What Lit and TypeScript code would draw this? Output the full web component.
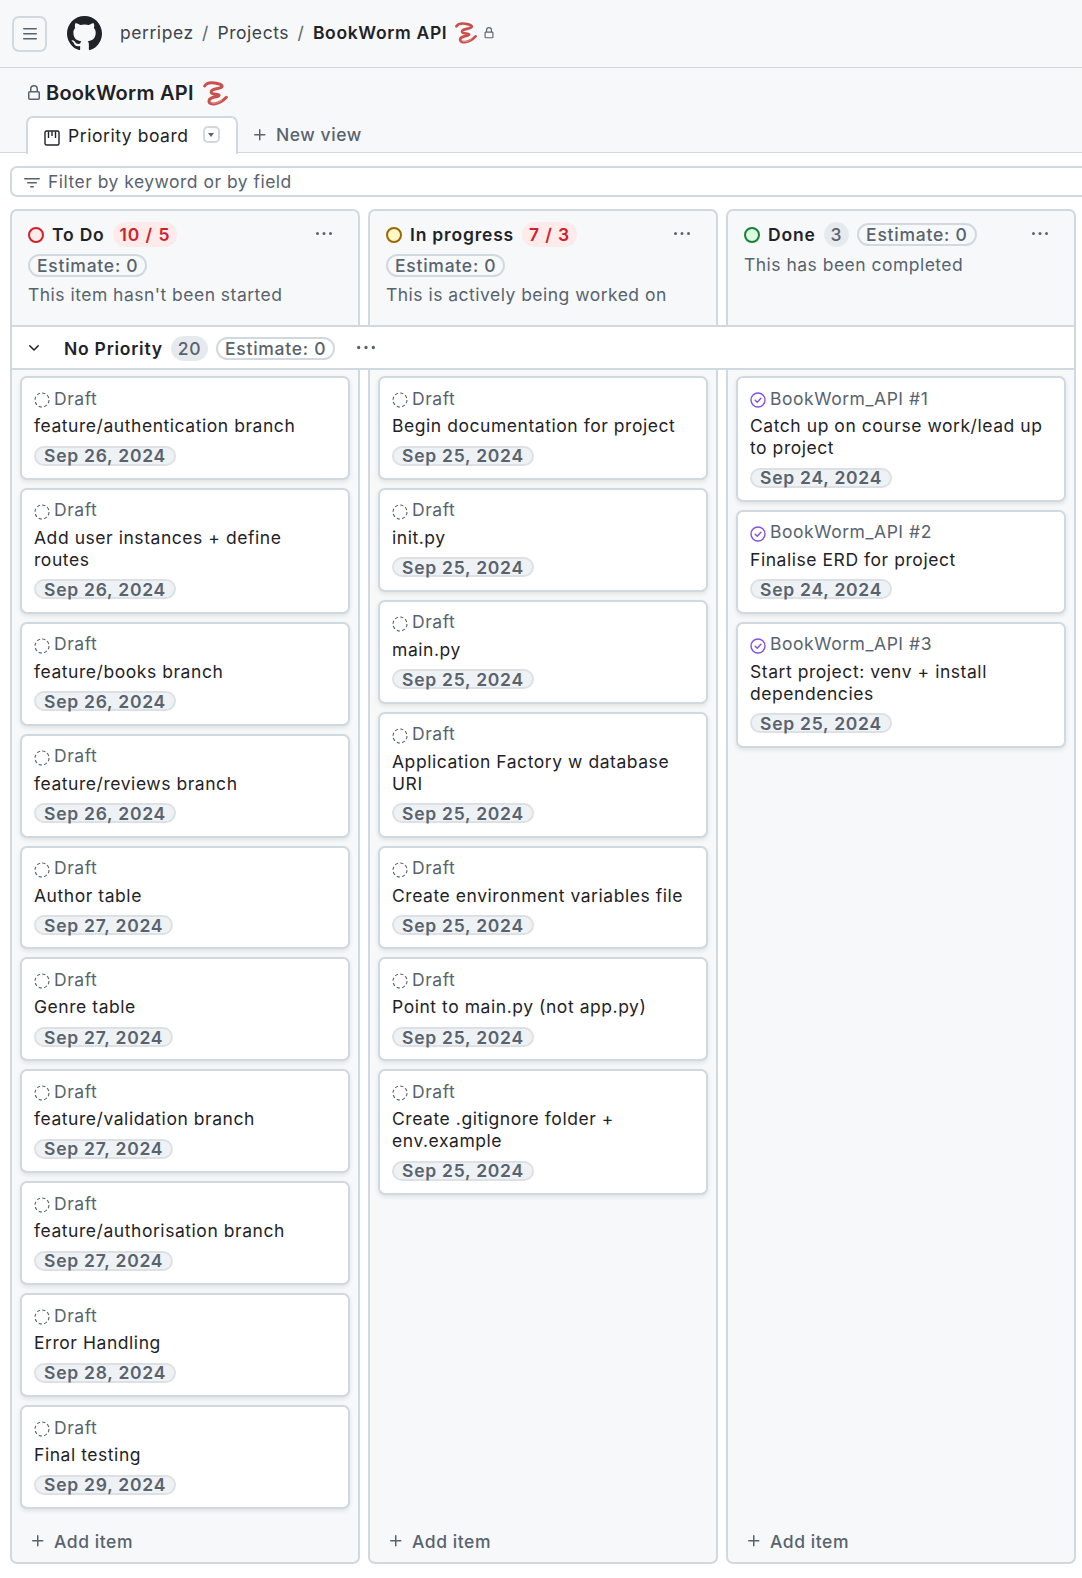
import { LitElement, html, css, svg } from 'lit';
import { customElement } from 'lit/decorators.js';

interface Card {
  meta: string;
  title: string;
  date: string;
}

interface Column {
  name: string;
  status: string;
  count: string;
  over: boolean;
  note: string;
  cards: Card[];
}

const draft = (title: string, date: string): Card => ({ meta: 'Draft', title, date });

const COLUMNS: Column[] = [
  {
    name: 'To Do',
    status: 'todo',
    count: '10 / 5',
    over: true,
    note: "This item hasn't been started",
    cards: [
      draft('feature/authentication branch', 'Sep 26, 2024'),
      draft('Add user instances + define routes', 'Sep 26, 2024'),
      draft('feature/books branch', 'Sep 26, 2024'),
      draft('feature/reviews branch', 'Sep 26, 2024'),
      draft('Author table', 'Sep 27, 2024'),
      draft('Genre table', 'Sep 27, 2024'),
      draft('feature/validation branch', 'Sep 27, 2024'),
      draft('feature/authorisation branch', 'Sep 27, 2024'),
      draft('Error Handling', 'Sep 28, 2024'),
      draft('Final testing', 'Sep 29, 2024'),
    ],
  },
  {
    name: 'In progress',
    status: 'progress',
    count: '7 / 3',
    over: true,
    note: 'This is actively being worked on',
    cards: [
      draft('Begin documentation for project', 'Sep 25, 2024'),
      draft('init.py', 'Sep 25, 2024'),
      draft('main.py', 'Sep 25, 2024'),
      draft('Application Factory w database URI', 'Sep 25, 2024'),
      draft('Create environment variables file', 'Sep 25, 2024'),
      draft('Point to main.py (not app.py)', 'Sep 25, 2024'),
      draft('Create .gitignore folder + env.example', 'Sep 25, 2024'),
    ],
  },
  {
    name: 'Done',
    status: 'done',
    count: '3',
    over: false,
    note: 'This has been completed',
    cards: [
      { meta: 'BookWorm_API #1', title: 'Catch up on course work/lead up to project', date: 'Sep 24, 2024' },
      { meta: 'BookWorm_API #2', title: 'Finalise ERD for project', date: 'Sep 24, 2024' },
      { meta: 'BookWorm_API #3', title: 'Start project: venv + install dependencies', date: 'Sep 25, 2024' },
    ],
  },
];

const PATHS = {
  bars: 'M1 2.75A.75.75 0 0 1 1.75 2h12.5a.75.75 0 0 1 0 1.5H1.75A.75.75 0 0 1 1 2.75Zm0 5A.75.75 0 0 1 1.75 7h12.5a.75.75 0 0 1 0 1.5H1.75A.75.75 0 0 1 1 7.75ZM1.75 12h12.5a.75.75 0 0 1 0 1.5H1.75a.75.75 0 0 1 0-1.5Z',
  github: 'M8 0c4.42 0 8 3.58 8 8a8.013 8.013 0 0 1-5.45 7.59c-.4.08-.55-.17-.55-.38 0-.27.01-1.13.01-2.2 0-.75-.25-1.23-.54-1.48 1.78-.2 3.65-.88 3.65-3.95 0-.88-.31-1.59-.82-2.15.08-.2.36-1.02-.08-2.12 0 0-.67-.22-2.2.82-.64-.18-1.32-.27-2-.27-.68 0-1.36.09-2 .27-1.53-1.03-2.2-.82-2.2-.82-.44 1.1-.16 1.92-.08 2.12-.51.56-.82 1.28-.82 2.15 0 3.06 1.86 3.75 3.64 3.95-.23.2-.44.55-.51 1.07-.46.21-1.61.55-2.33-.66-.15-.24-.6-.83-1.23-.82-.67.01-.27.38.01.53.34.19.73.9.82 1.13.16.45.68 1.31 2.69.94 0 .67.01 1.3.01 1.49 0 .21-.15.45-.55.38A7.995 7.995 0 0 1 0 8c0-4.42 3.58-8 8-8Z',
  lock: 'M4 4a4 4 0 0 1 8 0v2h.25c.966 0 1.75.784 1.75 1.75v5.5A1.75 1.75 0 0 1 12.25 15h-8.5A1.75 1.75 0 0 1 2 13.25v-5.5C2 6.784 2.784 6 3.75 6H4Zm8.25 3.5h-8.5a.25.25 0 0 0-.25.25v5.5c0 .138.112.25.25.25h8.5a.25.25 0 0 0 .25-.25v-5.5a.25.25 0 0 0-.25-.25ZM10.5 6V4a2.5 2.5 0 1 0-5 0v2Z',
  plus: 'M7.75 2a.75.75 0 0 1 .75.75V7h4.25a.75.75 0 0 1 0 1.5H8.5v4.25a.75.75 0 0 1-1.5 0V8.5H2.75a.75.75 0 0 1 0-1.5H7V2.75A.75.75 0 0 1 7.75 2Z',
  kebab: 'M8 9a1.5 1.5 0 1 0 0-3 1.5 1.5 0 0 0 0 3ZM1.5 9a1.5 1.5 0 1 0 0-3 1.5 1.5 0 0 0 0 3Zm13 0a1.5 1.5 0 1 0 0-3 1.5 1.5 0 0 0 0 3Z',
  chevron: 'M12.78 5.22a.749.749 0 0 1 0 1.06l-4.25 4.25a.749.749 0 0 1-1.06 0L3.22 6.28a.749.749 0 1 1 1.06-1.06L8 8.939l3.72-3.719a.749.749 0 0 1 1.06 0Z',
  filter: 'M.75 3h14.5a.75.75 0 0 1 0 1.5H.75a.75.75 0 0 1 0-1.5ZM3 7.75A.75.75 0 0 1 3.75 7h8.5a.75.75 0 0 1 0 1.5h-8.5A.75.75 0 0 1 3 7.75Zm3 4a.75.75 0 0 1 .75-.75h2.5a.75.75 0 0 1 0 1.5h-2.5a.75.75 0 0 1-.75-.75Z',
};

const icon = (d: string, size: number, cls = '') => html`
  <svg class=${cls} width=${size} height=${size} viewBox="0 0 16 16" fill="currentColor"><path d=${d}></path></svg>
`;

// the worm emoji, no colour emoji font in the sandbox
const worm = (size: number) => html`
  <svg class="worm" width=${size} height=${size} viewBox="0 0 24 24" fill="none" stroke-linecap="round" stroke-linejoin="round">
    ${svg`<path d="M2.500 5.500C5 1.500 11 2.500 15 3.500 19 4.500 20 6.500 16 7.500 12 8.500 8 9 8.500 11.500 9 13.500 13 13 15 13.500 16.500 14 15.500 15 13 15.500 9 16.300 6 17 6.500 20 7 23.500 16 23 22.500 16"
      stroke="#c9504c" stroke-width="2.800"></path>
      <path d="M8 20c.5 2.500 6.500 2 10.500-1.500" stroke="#ec9a90" stroke-width="0.800"></path>`}
  </svg>
`;

const draftIcon = html`
  <svg class="meta-icon" width="16" height="16" viewBox="0 0 16 16" fill="none">
    <circle cx="8" cy="8" r="7" stroke="#59636e" stroke-width="1.1" stroke-dasharray="3.3 2.200"></circle>
  </svg>
`;

const closedIcon = html`
  <svg class="meta-icon" width="16" height="16" viewBox="0 0 16 16" fill="none" stroke="#8250df">
    <circle cx="8" cy="8" r="7" stroke-width="1.4"></circle>
    <path d="M5.200 8.200 7.200 10.200 10.900 6.200" stroke-width="1.4" stroke-linecap="round" stroke-linejoin="round"></path>
  </svg>
`;

@customElement('app-root')
export class AppRoot extends LitElement {
  static override styles = css`
    :host {
      display: block;
      width: 1082px;
      height: 1578px;
      overflow: hidden;
      background: #fff;
      font-family: Inter, 'Liberation Sans', sans-serif;
      font-size: 17.5px;
      letter-spacing: 0.55px;
      color: #1f2328;
    }

    svg {
      display: block;
      flex: none;
    }

    .top {
      display: flex;
      align-items: center;
      height: 67px;
      padding-left: 12px;
      background: #f6f8fa;
      border-bottom: 1px solid #d1d9e0;
    }

    .menu {
      display: flex;
      align-items: center;
      justify-content: center;
      width: 35px;
      height: 36px;
      box-sizing: border-box;
      border: 2px solid #d1d9e0;
      border-radius: 7px;
      color: #59636e;
    }

    .logo {
      margin: 0 18px 0 20px;
      color: #1f2328;
    }

    .crumb {
      display: flex;
      align-items: center;
      margin-bottom: 2px;
      color: #3d444d;
    }

    .slash {
      margin: 0 8.5px;
      color: #59636e;
    }

    .crumb strong {
      font-weight: 600;
      letter-spacing: 0.65px;
      color: #1f2328;
    }

    .worm {
      margin-left: 7px;
    }

    .small-lock {
      margin-left: 6px;
      color: #59636e;
    }

    .head {
      background: #f6f8fa;
      border-bottom: 1px solid #d1d9e0;
      height: 85px;
      box-sizing: border-box;
      padding: 11px 0 0 26px;
    }

    .title {
      display: flex;
      align-items: center;
      height: 28px;
      font-size: 20px;
      font-weight: 600;
      letter-spacing: 0.25px;
    }

    .title .lock {
      margin-right: 4px;
      color: #59636e;
    }

    .title .worm {
      margin-left: 8px;
    }

    .tabs {
      display: flex;
      align-items: flex-end;
      margin-top: 9px;
    }

    .tab {
      display: flex;
      align-items: center;
      height: 38px;
      width: 212px;
      box-sizing: border-box;
      margin-bottom: -1px;
      padding: 0 0 2px 16px;
      background: #fff;
      border: 2px solid #d1d9e0;
      border-bottom: none;
      border-radius: 7px 7px 0 0;
    }

    .tab .board {
      margin-right: 8px;
      margin-top: 5px;
    }

    .caret {
      display: flex;
      align-items: center;
      justify-content: center;
      width: 17px;
      height: 17px;
      margin-left: 14px;
      margin-bottom: 2px;
      box-sizing: border-box;
      border: 2px solid #d1d9e0;
      border-radius: 5px;
    }

    .caret i {
      border: 3px solid transparent;
      border-top: 4px solid #59636e;
      margin-top: 4px;
    }

    .new-view {
      display: flex;
      align-items: center;
      gap: 8px;
      height: 37px;
      padding-left: 14px;
      color: #59636e;
      font-weight: 500;
    }

    .filter {
      display: flex;
      align-items: center;
      gap: 8px;
      height: 31px;
      width: 1100px;
      box-sizing: border-box;
      margin: 13px 0 12px 10px;
      padding-left: 12px;
      background: #fff;
      border: 2px solid #d1d9e0;
      border-radius: 7px;
      color: #59636e;
      letter-spacing: 0.48px;
    }

    .filter svg {
      margin-top: 2px;
    }

    .board-grid {
      display: grid;
      grid-template-columns: repeat(3, 350px);
      column-gap: 8px;
      margin-left: 10px;
    }

    .col-head {
      height: 116px;
      box-sizing: border-box;
      padding: 11px 0 0 16px;
      background: #f6f8fa;
      border: 2px solid #d1d9e0;
      border-bottom: none;
      border-radius: 7px 7px 0 0;
      position: relative;
    }

    .col-row {
      display: flex;
      align-items: center;
      flex-wrap: wrap;
      gap: 7px 8px;
      width: 250px;
    }

    .status {
      width: 16px;
      height: 16px;
      box-sizing: border-box;
      border-radius: 50%;
      border: 2px solid;
    }

    .status.todo {
      border-color: #cf222e;
      background: #ffebe9;
    }

    .status.progress {
      border-color: #9a6700;
      background: #fff8c5;
    }

    .status.done {
      border-color: #1a7f37;
      background: #dafbe1;
    }

    .name {
      font-weight: 600;
      letter-spacing: 0.8px;
    }

    .count {
      display: inline-flex;
      align-items: center;
      height: 25px;
      padding: 0 7px;
      border-radius: 13px;
      background: #e6eaef;
      color: #59636e;
      font-weight: 500;
    }

    .count.over {
      background: #ffebe9;
      color: #cf222e;
      font-weight: 600;
      letter-spacing: 0.9px;
    }

    .pill {
      display: inline-flex;
      align-items: center;
      height: 23px;
      padding: 0 7px;
      box-sizing: border-box;
      border: 2px solid #d1d9e0;
      border-radius: 12px;
      color: #59636e;
      font-weight: 500;
      letter-spacing: 0.75px;
    }

    .note {
      margin-top: 7px;
      color: #59636e;
      line-height: 22px;
      letter-spacing: 0.48px;
    }

    .dots {
      position: absolute;
      top: 15px;
      right: 26px;
      color: #59636e;
    }

    .group {
      display: flex;
      align-items: center;
      height: 45px;
      width: 1066px;
      margin-left: 10px;
      box-sizing: border-box;
      padding: 1px 0 0 14px;
      background: #fff;
      border: 2px solid #d1d9e0;
    }

    .group .name {
      margin: 0 8px 0 22px;
      letter-spacing: 0.75px;
    }

    .group .pill {
      margin-left: 8px;
    }

    .group .more {
      margin-left: 22px;
      color: #59636e;
    }

    .lane {
      display: flex;
      flex-direction: column;
      height: 1194px;
      box-sizing: border-box;
      padding: 6px 8px 0;
      background: #f6f8fa;
      border: 2px solid #d1d9e0;
      border-top: none;
      border-radius: 0 0 7px 7px;
    }

    .cards {
      display: flex;
      flex-direction: column;
      gap: 8px;
      flex: 1;
    }

    .card {
      padding: 10px 12px 11.8px;
      background: #fff;
      border: 2px solid #d1d9e0;
      border-radius: 7px;
      box-shadow: 0 2px 4px rgba(31, 35, 40, 0.1);
    }

    .meta {
      display: flex;
      align-items: center;
      height: 20px;
      color: #59636e;
    }

    .meta-icon {
      margin: 4px 4px 0 0;
    }

    .card-title {
      margin-top: 7px;
      max-width: 296px;
      line-height: 22px;
    }

    .date {
      display: inline-flex;
      align-items: center;
      height: 20px;
      margin-top: 8.6px;
      padding: 0 8px;
      box-sizing: border-box;
      border: 2px solid #dde1e6;
      border-radius: 10px;
      background: #eff2f5;
      color: #59636e;
      font-weight: 600;
      letter-spacing: 0.75px;
    }

    .add {
      display: flex;
      align-items: center;
      gap: 8px;
      height: 38px;
      margin-bottom: 2px;
      padding-left: 10px;
      color: #59636e;
      font-weight: 500;
    }
  `;

  private renderHead(col: Column) {
    const estimate = html`<span class="pill">Estimate: 0</span>`;
    return html`
      <div class="col-head">
        <div class="col-row">
          <span class="status ${col.status}"></span>
          <span class="name">${col.name}</span>
          <span class="count ${col.over ? 'over' : ''}">${col.count}</span>
          ${estimate}
        </div>
        <div class="note">${col.note}</div>
        <span class="dots">${icon(PATHS.kebab, 16)}</span>
      </div>
    `;
  }

  private renderCard(card: Card) {
    return html`
      <div class="card">
        <div class="meta">${card.meta === 'Draft' ? draftIcon : closedIcon}${card.meta}</div>
        <div class="card-title">${card.title}</div>
        <span class="date">${card.date}</span>
      </div>
    `;
  }

  override render() {
    return html`
      <div class="top">
        <span class="menu">${icon(PATHS.bars, 16)}</span>
        <span class="logo">${icon(PATHS.github, 35)}</span>
        <div class="crumb">
          perripez<span class="slash">/</span>Projects<span class="slash">/</span><strong>BookWorm API</strong>
          ${worm(23)}
          <span class="small-lock">${icon(PATHS.lock, 12)}</span>
        </div>
      </div>

      <div class="head">
        <div class="title"><span class="lock">${icon(PATHS.lock, 16)}</span>BookWorm API ${worm(26)}</div>
        <div class="tabs">
          <div class="tab">
            <svg class="board" width="16" height="16" viewBox="0 0 16 16" fill="none" stroke="#1f2328" stroke-width="1.400">
              <rect x="1" y="1" width="14" height="14" rx="1.500"></rect>
              <path d="M4.500 1.500V8M8 1.500V6M11.500 1.500V8"></path>
            </svg>
            Priority board
            <span class="caret"><i></i></span>
          </div>
          <div class="new-view">${icon(PATHS.plus, 16)}New view</div>
        </div>
      </div>

      <div class="filter">${icon(PATHS.filter, 16)}Filter by keyword or by field</div>

      <div class="board-grid">${COLUMNS.map((c) => this.renderHead(c))}</div>

      <div class="group">
        <span>${icon(PATHS.chevron, 16)}</span>
        <span class="name">No Priority</span>
        <span class="count">20</span>
        <span class="pill">Estimate: 0</span>
        <span class="more">${icon(PATHS.kebab, 18)}</span>
      </div>

      <div class="board-grid">
        ${COLUMNS.map(
          (c) => html`
            <div class="lane">
              <div class="cards">${c.cards.map((card) => this.renderCard(card))}</div>
              <div class="add">${icon(PATHS.plus, 16)}Add item</div>
            </div>
          `,
        )}
      </div>
    `;
  }
}

declare global {
  interface HTMLElementTagNameMap {
    'app-root': AppRoot;
  }
}
